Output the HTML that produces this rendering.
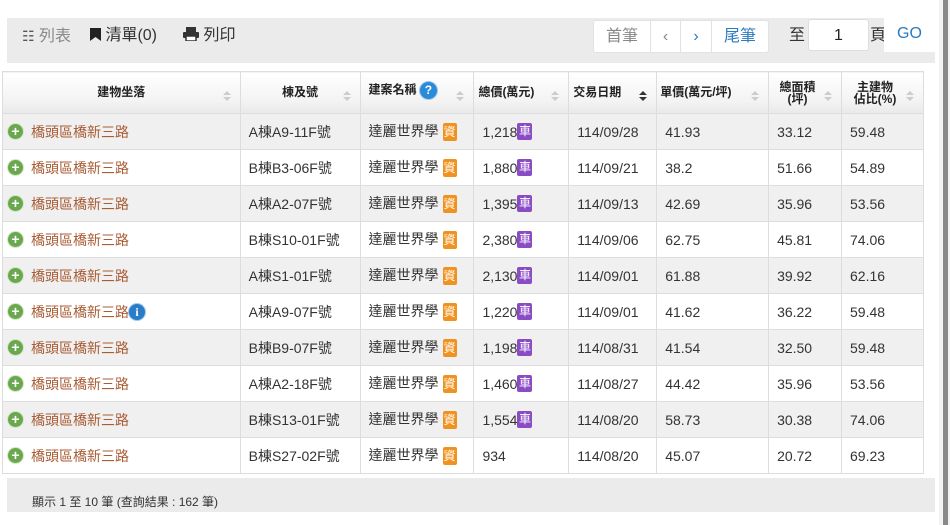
<!DOCTYPE html>
<html><head><meta charset="utf-8"><style>
*{box-sizing:border-box;margin:0;padding:0}
body{width:950px;height:525px;background:#fff;font-family:"Liberation Sans","Noto Sans CJK TC",sans-serif;color:#333;position:relative;overflow:hidden}
.bar{position:absolute;left:7px;top:18px;width:928px;height:45px;background:#ebebeb}
.tb{position:absolute;top:26px;font-size:16px;line-height:20px;color:#333}
.pg{position:absolute;top:20px;height:33px;background:#fff;border:1px solid #e2e2e2;font-size:16px;line-height:31px;text-align:center}
.foot{position:absolute;left:7px;top:478px;width:928px;height:34px;background:#ebebeb;font-size:12px;line-height:14px;color:#333;padding:17px 0 0 25px}
table{position:absolute;left:2px;top:71px;border-collapse:collapse;width:922px;font-size:14px;line-height:18px}
td,th{border:1px solid #ddd;height:36px;padding:0 0 0 8px;text-align:left;white-space:nowrap;vertical-align:middle}
th{height:42px;font-size:12px;line-height:13px;font-weight:bold;background:linear-gradient(#fff,#f3f3f3 70%,#e9e9e9);position:relative;color:#222}
th .s{position:absolute;right:10px;top:19px;width:7px}
th .s:before,th .s:after{content:"";position:absolute;left:0;border-left:4px solid transparent;border-right:4px solid transparent}
th .s:before{top:0;border-bottom:4px solid #ccc}
th .s:after{top:6px;border-top:4px solid #ccc}
th .d:before{border-bottom-color:#333}th .d:after{border-top-color:#333}
tr.o td{background:#f0f0f0}
.a{color:#a85d35;padding-left:5px}
.p{display:inline-block;width:15px;height:15px;border-radius:50%;background:#6aa84f;color:#fff;font-size:14px;line-height:14px;text-align:center;font-weight:bold;vertical-align:middle;margin:-3px 8px 0 0;box-shadow:0 0 0 1px #d5e6c8}
.z{display:inline-block;width:14px;height:18px;background:#f0921f;color:#fff;font-size:12px;line-height:18px;text-align:center;margin:-2px 0 0 4px;vertical-align:middle;border-radius:2px}
.c{display:inline-block;width:15px;height:17px;background:#8a4bc4;color:#fff;font-size:12px;line-height:17px;text-align:center;margin-top:-2px;vertical-align:middle;border-radius:2px}
.i{display:inline-block;width:16px;height:16px;border-radius:50%;background:#2a7bc8;color:#fff;text-align:center;line-height:16px;font-size:12px;font-weight:bold;font-family:'Liberation Serif',serif;vertical-align:middle;margin-top:-2px;box-shadow:0 0 0 1px #9cc9ee}
</style></head><body>
<div class="bar"></div>
<div class="tb" style="left:22px;color:#888"><span style="font-size:14px;color:#555">☷</span> 列表</div>
<div class="tb" style="left:90px"><svg width="11" height="13" style="vertical-align:-1px"><path d="M0 0H11V13L5.5 9L0 13Z" fill="#222"/></svg> 清單(0)</div>
<div class="tb" style="left:183px"><svg width="16" height="14" style="vertical-align:-1px"><rect x="3" y="0" width="10" height="5" fill="#333"/><rect x="0" y="5" width="16" height="6" rx="1" fill="#333"/><rect x="3" y="9" width="10" height="5" fill="#fff" stroke="#333" stroke-width="1.5"/></svg> 列印</div>
<div class="pg" style="left:593px;width:58px;color:#888;border-radius:3px 0 0 3px">首筆</div>
<div class="pg" style="left:650px;width:31px;color:#888">‹</div>
<div class="pg" style="left:680px;width:32px;color:#2a7bc0">›</div>
<div class="pg" style="left:711px;width:58px;color:#2a7bc0;border-radius:0 3px 3px 0">尾筆</div>
<div class="tb" style="left:789px">至</div>
<div class="pg" style="left:808px;top:19px;width:61px;height:32px;border-radius:3px;color:#222;border-color:#ddd">1</div>
<div class="tb" style="left:870px">頁</div>
<div class="pg" style="left:884px;top:18px;width:51px;height:34px;color:#2a7bc0;border:none">GO</div>
<div style="position:absolute;left:939px;top:0;width:11px;height:525px;background:#f3f3f3"></div>
<div style="position:absolute;left:943px;top:0;width:5px;height:525px;background:#8a8a8a"></div>
<table>
<colgroup><col style="width:238px"><col style="width:120px"><col style="width:114px"><col style="width:95px"><col style="width:88px"><col style="width:112px"><col style="width:73px"><col style="width:82px"></colgroup>
<tr><th style="text-align:center;padding:0">建物坐落<span class="s"></span></th><th style="text-align:center;padding:0">棟及號<span class="s"></span></th><th style="vertical-align:top;padding-top:10px">建案名稱 <span style="display:inline-block;width:17px;height:17px;border-radius:50%;background:#2a8bd8;color:#fff;text-align:center;line-height:17px;font-size:12px;vertical-align:middle;box-shadow:0 0 0 1px #9cc9ee">?</span><span class="s"></span></th><th style="padding-left:4px">總價(萬元)<span class="s"></span></th><th style="padding-left:4px">交易日期<span class="s d"></span></th><th style="padding-left:3px">單價(萬元/坪)<span class="s"></span></th><th style="padding-left:3px;line-height:12px;text-align:center;padding-right:18px">總面積<br>(坪)<span class="s"></span></th><th style="padding-left:3px;line-height:12px;text-align:center;padding-right:18px">主建物<br>佔比(%)<span class="s"></span></th></tr>
<tr class="o"><td class="a"><span class="p">+</span>橋頭區橋新三路</td><td>A棟A9-11F號</td><td>達麗世界學<span class="z">資</span></td><td>1,218<span class="c">車</span></td><td>114/09/28</td><td>41.93</td><td>33.12</td><td>59.48</td></tr>
<tr><td class="a"><span class="p">+</span>橋頭區橋新三路</td><td>B棟B3-06F號</td><td>達麗世界學<span class="z">資</span></td><td>1,880<span class="c">車</span></td><td>114/09/21</td><td>38.2</td><td>51.66</td><td>54.89</td></tr>
<tr class="o"><td class="a"><span class="p">+</span>橋頭區橋新三路</td><td>A棟A2-07F號</td><td>達麗世界學<span class="z">資</span></td><td>1,395<span class="c">車</span></td><td>114/09/13</td><td>42.69</td><td>35.96</td><td>53.56</td></tr>
<tr><td class="a"><span class="p">+</span>橋頭區橋新三路</td><td>B棟S10-01F號</td><td>達麗世界學<span class="z">資</span></td><td>2,380<span class="c">車</span></td><td>114/09/06</td><td>62.75</td><td>45.81</td><td>74.06</td></tr>
<tr class="o"><td class="a"><span class="p">+</span>橋頭區橋新三路</td><td>A棟S1-01F號</td><td>達麗世界學<span class="z">資</span></td><td>2,130<span class="c">車</span></td><td>114/09/01</td><td>61.88</td><td>39.92</td><td>62.16</td></tr>
<tr><td class="a"><span class="p">+</span>橋頭區橋新三路<span class="i">i</span></td><td>A棟A9-07F號</td><td>達麗世界學<span class="z">資</span></td><td>1,220<span class="c">車</span></td><td>114/09/01</td><td>41.62</td><td>36.22</td><td>59.48</td></tr>
<tr class="o"><td class="a"><span class="p">+</span>橋頭區橋新三路</td><td>B棟B9-07F號</td><td>達麗世界學<span class="z">資</span></td><td>1,198<span class="c">車</span></td><td>114/08/31</td><td>41.54</td><td>32.50</td><td>59.48</td></tr>
<tr><td class="a"><span class="p">+</span>橋頭區橋新三路</td><td>A棟A2-18F號</td><td>達麗世界學<span class="z">資</span></td><td>1,460<span class="c">車</span></td><td>114/08/27</td><td>44.42</td><td>35.96</td><td>53.56</td></tr>
<tr class="o"><td class="a"><span class="p">+</span>橋頭區橋新三路</td><td>B棟S13-01F號</td><td>達麗世界學<span class="z">資</span></td><td>1,554<span class="c">車</span></td><td>114/08/20</td><td>58.73</td><td>30.38</td><td>74.06</td></tr>
<tr><td class="a"><span class="p">+</span>橋頭區橋新三路</td><td>B棟S27-02F號</td><td>達麗世界學<span class="z">資</span></td><td>934</td><td>114/08/20</td><td>45.07</td><td>20.72</td><td>69.23</td></tr>
</table>
<div class="foot">顯示 1 至 10 筆 (查詢結果 : 162 筆)</div>
</body></html>
